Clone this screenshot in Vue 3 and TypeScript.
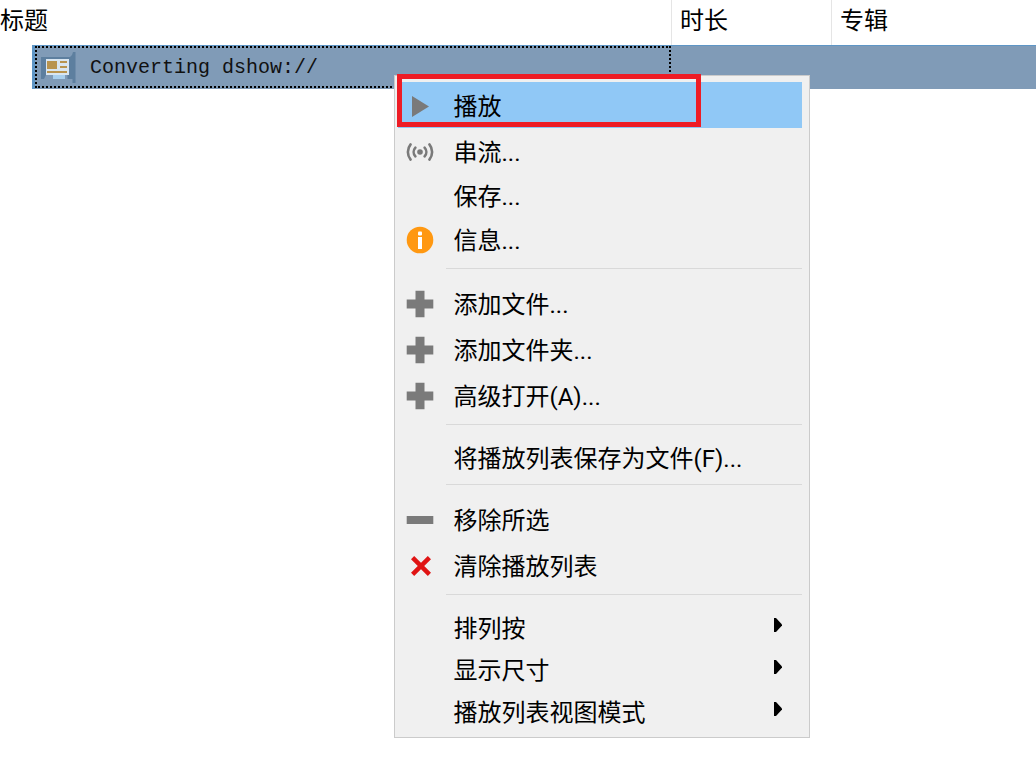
<script setup lang="ts">
type Item = { label?: string; icon?: string; h?: number; sub?: boolean; active?: boolean; sep?: boolean }
const items: Item[] = [
  { label: '播放', icon: 'play', h: 46, active: true },
  { label: '串流...', icon: 'stream', h: 46 },
  { label: '保存...', h: 42 },
  { label: '信息...', icon: 'info', h: 46 },
  { sep: true },
  { label: '添加文件...', icon: 'plus', h: 46 },
  { label: '添加文件夹...', icon: 'plus', h: 46 },
  { label: '高级打开(A)...', icon: 'plus', h: 46 },
  { sep: true },
  { label: '将播放列表保存为文件(F)...', h: 42 },
  { sep: true },
  { label: '移除所选', icon: 'minus', h: 46 },
  { label: '清除播放列表', icon: 'close', h: 46 },
  { sep: true },
  { label: '排列按', h: 42, sub: true },
  { label: '显示尺寸', h: 42, sub: true },
  { label: '播放列表视图模式', h: 42, sub: true },
]
</script>

<template>
  <div class="page">
    <header class="head">
      <div class="col col-title">标题</div>
      <div class="col col-len">时长</div>
      <div class="col col-album">专辑</div>
    </header>
    <div class="track">
      <div class="track-focus">
        <svg class="card" width="35" height="31" viewBox="0 0 35 31">
          <path d="M0 5h29l2-2 1-3h2.500v31h-3v-4h-5v-4H5l-2 4H0z" fill="#5d7f9f" />
          <rect x="5" y="7" width="23" height="16" fill="#d9e6f1" />
          <rect x="6" y="9" width="10" height="8" fill="#b8944f" />
          <rect x="19" y="9" width="7" height="2" fill="#b8944f" />
          <rect x="19" y="14" width="7" height="2" fill="#b8944f" />
          <rect x="6" y="19" width="20" height="2" fill="#b8944f" />
          <rect x="12" y="23" width="12" height="4" fill="#a9d0ee" />
        </svg>
        <span class="track-name">Converting dshow://</span>
      </div>
    </div>

    <div class="menu">
      <template v-for="(item, i) in items" :key="i">
        <div v-if="item.sep" class="sep"></div>
        <div
          v-else
          class="item"
          :class="{ active: item.active }"
          :style="{ height: item.h + 'px' }"
        >
          <span class="icon">
            <svg v-if="item.icon === 'play'" width="28" height="28" viewBox="0 0 28 28">
              <path d="M6 4L23 14.5 6 25z" fill="#7a7a7a" />
            </svg>
            <svg v-else-if="item.icon === 'stream'" width="28" height="28" viewBox="0 0 28 28" fill="none" stroke="#7a7a7a" stroke-width="2.6" stroke-linecap="round">
              <circle cx="14" cy="14" r="2.8" fill="#7a7a7a" stroke="none" />
              <path d="M9.4 9.6a6.5 6.5 0 0 0 0 8.8" />
              <path d="M18.6 9.6a6.5 6.5 0 0 1 0 8.8" />
              <path d="M4.6 6.4a12 12 0 0 0 0 15.2" />
              <path d="M23.4 6.4a12 12 0 0 1 0 15.2" />
            </svg>
            <svg v-else-if="item.icon === 'info'" width="28" height="28" viewBox="0 0 28 28">
              <circle cx="14" cy="14" r="13.3" fill="#ff9811" />
              <rect x="12" y="5.5" width="4" height="4" rx="1" fill="#fff" />
              <rect x="12" y="11" width="4" height="12" fill="#fff" />
            </svg>
            <svg v-else-if="item.icon === 'plus'" width="28" height="28" viewBox="0 0 28 28">
              <path d="M9.500 0.7h9v8.800h8.800v9h-8.800v8.800h-9v-8.800H0.700v-9h8.800z" fill="#7a7a7a" />
            </svg>
            <svg v-else-if="item.icon === 'minus'" width="28" height="28" viewBox="0 0 28 28">
              <rect x="0.7" y="10" width="26.6" height="8" fill="#7a7a7a" />
            </svg>
            <svg v-else-if="item.icon === 'close'" width="28" height="28" viewBox="0 0 28 28">
              <path d="M6.600 5.600l16.800 16.800M23.400 5.600L6.600 22.400" stroke="#e01414" stroke-width="4.5" fill="none" />
            </svg>
          </span>
          <span class="label">{{ item.label }}</span>
          <svg v-if="item.sub" class="arrow" width="8" height="14" viewBox="0 0 8 14">
            <path d="M0 0h2l6 6.5v1L2 14H0z" fill="#000" />
          </svg>
        </div>
      </template>
      <div class="redbox"></div>
    </div>
  </div>
</template>

<style scoped>
.page {
  position: relative;
  width: 1036px;
  height: 776px;
  background: #fff;
  overflow: hidden;
  font-family: Roboto, "Noto Sans CJK SC", "Noto Sans", sans-serif;
  color: #000;
}
.head {
  display: flex;
  height: 45px;
  font-size: 24px;
  line-height: 43px;
}
.col {
  height: 45px;
  box-sizing: border-box;
}
.col-title {
  width: 672px;
  border-right: 1px solid #e5e5e5;
}
.col-len {
  width: 160px;
  padding-left: 8px;
  border-right: 1px solid #e5e5e5;
}
.col-album {
  flex: 1;
  padding-left: 8px;
}
.track {
  margin-left: 32px;
  height: 44px;
  background: #809bb7;
  border-top: 1px solid #5e96c6;
  border-left: 3px solid #5e96c6;
  box-sizing: border-box;
}
.track-focus {
  display: flex;
  align-items: center;
  width: 636px;
  height: 42px;
  box-sizing: border-box;
  border: 2px dotted #000;
  padding-left: 4px;
}
.card {
  flex: none;
}
.track-name {
  margin-left: 14px;
  padding-top: 1px;
  font-family: "Liberation Mono", monospace;
  font-size: 20px;
  color: #111;
}
.menu {
  position: absolute;
  left: 394px;
  top: 75px;
  width: 416px;
  height: 663px;
  box-sizing: border-box;
  background: #f0f0f0;
  border: 1px solid #cbcbcb;
  padding: 6px 7px 4px 3px;
}
.item {
  position: relative;
  display: flex;
  align-items: center;
  font-size: 24px;
  line-height: 1;
}
.item.active {
  background: #90c8f6;
}
.icon {
  width: 55.5px;
  flex: none;
  display: flex;
  padding-left: 8px;
  padding-top: 2px;
  box-sizing: border-box;
}
.icon svg {
  display: block;
}
.label {
  white-space: nowrap;
  padding-top: 3px;
}
.arrow {
  position: absolute;
  right: 20px;
  top: 12px;
}
.sep {
  height: 1px;
  margin: 6px 0 11px 48px;
  background: #d9d9d9;
}
.redbox {
  position: absolute;
  left: 2px;
  top: -2px;
  width: 304px;
  height: 53px;
  box-sizing: border-box;
  border: 5px solid #ee1c25;
}
</style>
